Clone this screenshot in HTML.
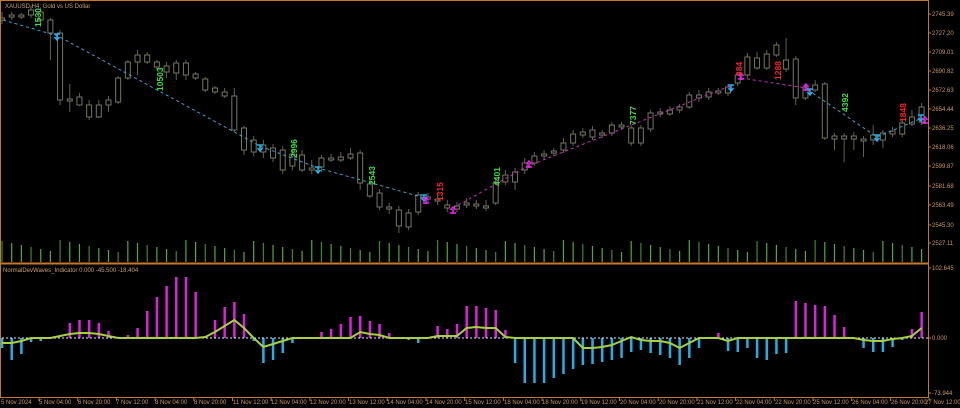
<!DOCTYPE html>
<html><head><meta charset="utf-8"><style>
html,body{margin:0;padding:0;background:#000;width:960px;height:408px;overflow:hidden}
svg{display:block}
text{font-family:"Liberation Sans",sans-serif}
</style></head><body>
<svg id="s" width="960" height="408" xmlns="http://www.w3.org/2000/svg">
<rect width="960" height="408" fill="#000"/>
<g id="g"></g>
<g fill="none" stroke="#c8782c" stroke-width="1">
<rect x="0.5" y="0.5" width="928" height="397"/>
<line x1="0" y1="263.5" x2="929" y2="263.5" stroke-width="2"/>
</g>
<g font-size="6" fill="#c8a070">
<text x="5" y="8">XAUUSD,H4:  Gold vs US Dollar</text>
<text x="3" y="272">NormalDevWaves_Indicator 0.000 -45.500 -18.404</text>
</g>
<g font-size="6" fill="#c89a60">
<text x="932" y="16">2745.39</text><text x="932" y="35">2727.20</text><text x="932" y="54">2709.01</text>
<text x="932" y="73">2690.82</text><text x="932" y="92">2672.63</text><text x="932" y="111">2654.44</text>
<text x="932" y="130">2636.25</text><text x="932" y="149">2618.06</text><text x="932" y="168">2599.87</text>
<text x="932" y="188">2581.68</text><text x="932" y="207">2563.49</text><text x="932" y="227">2545.30</text>
<text x="932" y="245">2527.11</text>
<text x="932" y="270">102.645</text><text x="932" y="340">0.000</text><text x="932" y="395">-73.944</text>
</g>
<g font-size="6" fill="#c89a60">
<text x="1" y="404">5 Nov 2024</text><text x="39" y="404">5 Nov 04:00</text><text x="78" y="404">6 Nov 20:00</text>
<text x="116" y="404">7 Nov 12:00</text><text x="155" y="404">8 Nov 04:00</text><text x="194" y="404">8 Nov 20:00</text>
<text x="233" y="404">11 Nov 12:00</text><text x="271" y="404">12 Nov 04:00</text><text x="310" y="404">12 Nov 20:00</text>
<text x="349" y="404">13 Nov 12:00</text><text x="387" y="404">14 Nov 04:00</text><text x="426" y="404">14 Nov 20:00</text>
<text x="465" y="404">15 Nov 12:00</text><text x="504" y="404">18 Nov 04:00</text><text x="542" y="404">18 Nov 20:00</text>
<text x="581" y="404">19 Nov 12:00</text><text x="620" y="404">20 Nov 04:00</text><text x="659" y="404">20 Nov 20:00</text>
<text x="697" y="404">21 Nov 12:00</text><text x="736" y="404">22 Nov 04:00</text><text x="775" y="404">22 Nov 20:00</text>
<text x="813" y="404">25 Nov 12:00</text><text x="852" y="404">26 Nov 04:00</text><text x="891" y="404">26 Nov 20:00</text>
<text x="925" y="404">27 Nov 12:00</text>
</g>
<g font-size="8.5" font-weight="bold">
<text transform="translate(41,27) rotate(-90)" fill="#3ee03e">1530</text>
<text transform="translate(163,91) rotate(-90)" fill="#3ee03e">10503</text>
<text transform="translate(297,158) rotate(-90)" fill="#3ee03e">2996</text>
<text transform="translate(375,185) rotate(-90)" fill="#3ee03e">2543</text>
<text transform="translate(443,201) rotate(-90)" fill="#ff2020">1315</text>
<text transform="translate(500,186) rotate(-90)" fill="#3ee03e">4401</text>
<text transform="translate(636,125) rotate(-90)" fill="#3ee03e">7377</text>
<text transform="translate(742,76) rotate(-90)" fill="#ff2020">384</text>
<text transform="translate(781,80) rotate(-90)" fill="#ff2020">1288</text>
<text transform="translate(848,112) rotate(-90)" fill="#3ee03e">4392</text>
<text transform="translate(906,122) rotate(-90)" fill="#ff2020">1848</text>
</g>
</svg>
<script>
var C=[[18,20,12,24],[15,17,12,20],[15,17,13,19],[10,15,6,18],[12,20,8,24],[20,33,18,60],[33,100,30,105],[99,101,84,112],[97,105,93,106],[105,117,100,120],[105,117,100,118],[100,105,96,112],[78,102,76,104],[62,78,60,80],[55,62,50,75],[55,62,52,64],[62,67,60,70],[66,72,62,78],[63,73,60,80],[63,75,60,80],[74,78,72,80],[79,90,77,92],[88,92,86,94],[92,96,88,98],[96,130,88,132],[128,150,126,155],[140,152,136,156],[145,152,140,158],[148,158,144,162],[150,170,146,174],[154,166,150,170],[155,170,150,172],[168,170,160,174],[158,167,155,172],[158,160,154,162],[157,160,152,162],[154,158,148,160],[153,183,150,190],[184,196,180,198],[193,207,189,210],[207,209,203,214],[210,226,206,233],[213,227,209,230],[195,212,192,215],[197,199,193,202],[199,201,194,205],[205,208,200,212],[206,209,202,212],[203,205,198,208],[204,206,200,209],[206,208,200,211],[182,203,178,205],[175,182,170,185],[172,182,168,190],[163,170,158,174],[156,163,152,166],[154,156,150,160],[151,153,148,156],[143,150,138,153],[134,143,130,146],[132,135,128,138],[130,137,126,140],[133,135,130,138],[125,133,122,136],[125,127,122,130],[128,143,125,146],[128,143,125,146],[113,129,110,132],[112,114,108,117],[110,114,106,116],[107,110,104,113],[95,107,92,109],[95,98,90,102],[92,97,88,100],[91,93,88,95],[87,93,84,96],[75,83,72,86],[57,75,53,78],[58,68,52,70],[54,68,50,70],[45,55,42,57],[60,69,38,72],[59,98,56,105],[88,98,84,100],[85,90,80,92],[84,138,82,140],[136,139,133,150],[136,139,133,162],[136,139,132,150],[139,141,136,157],[135,140,125,145],[133,140,130,148],[131,134,127,137],[123,134,120,137],[117,124,110,126],[107,122,103,125]];
var H=[-10,-22,-16,-4,-3,1,0,15,18,18,15,7,0,3,10,27,41,52,61,61,46,2,18,31,36,24,-3,-25,-22,-15,-5,0,1,6,9,14,21,22,17,14,5,0,-2,-5,0,12,9,14,32,32,30,28,8,-25,-45,-45,-45,-40,-36,-31,-27,-26,-24,-22,-20,-14,-12,-15,-17,-20,-27,-20,-10,0,5,-13,-14,-10,-20,-22,-16,-15,37,35,33,32,23,11,0,-10,-14,-14,-9,-2,9,26];
var L={0:-5,1:-5,2:-3,6:2,7:4,8:5,9:5,10:4,11:2,21:1,22:6,23:12,24:18,25:10,27:-9,28:-6,29:-3,37:6,38:4,39:3,45:2,46:2,47:2,48:10,49:11,50:10,51:10,52:1,60:-10,61:-10,62:-9,63:-7,64:-3,65:1,66:-2,67:-3,68:-3,69:-5,70:-10,71:-5,75:-3,89:-2,90:-3,91:-3,92:-1,94:2,95:10};
var o='',Z=338;
function X(i){return 2+9.68*i}
for(var i=0;i<96;i++){var x=X(i),c=C[i];
 o+='<line x1="'+x+'" y1="'+c[2]+'" x2="'+x+'" y2="'+c[3]+'" stroke="#62624e"/>';
 o+='<rect x="'+(x-2.5)+'" y="'+c[0]+'" width="5" height="'+Math.max(1,c[1]-c[0])+'" fill="#000" stroke="#76765e"/>';
 var v=10+((i*37+11)%13);
 o+='<line x1="'+x+'" y1="'+(262-v)+'" x2="'+x+'" y2="262" stroke="'+(i%3?'#4cb02c':'#3a8a2a')+'" stroke-width="1.2"/>';
 var h=H[i];
 if(h>0)o+='<rect x="'+(x-1.2)+'" y="'+(Z-h)+'" width="2.5" height="'+h+'" fill="#e020e0"/>';
 else if(h<0)o+='<rect x="'+(x-1.2)+'" y="'+Z+'" width="2.5" height="'+(-h)+'" fill="#20b0e8"/>';
}
o+='<line x1="2" y1="'+Z+'" x2="928" y2="'+Z+'" stroke="#d8f0ff" stroke-dasharray="2,2"/>';
var p='';for(i=0;i<96;i++)p+=(i?'L':'M')+X(i)+' '+(Z-(L[i]||0));
o+='<path d="'+p+'" fill="none" stroke="#a8d040" stroke-width="2"/>';
o+='<polyline points="3,20 58,36 260,146 318,168 425,198" fill="none" stroke="#30a8d8" stroke-dasharray="3,3"/>';
o+='<polyline points="453,208 528,166 730,86" fill="none" stroke="#c030c0" stroke-dasharray="3,3"/>';
o+='<polyline points="741,78 806,88" fill="none" stroke="#c030c0" stroke-dasharray="3,3"/>';
o+='<polyline points="808,90 877,137 922,118" fill="none" stroke="#30a8d8" stroke-dasharray="3,3"/>';
var A=[[57,36,'c'],[260,147,'c'],[318,169,'c'],[424,197,'c'],[731,87,'c'],[810,91,'c'],[877,137,'c'],[921,117,'c'],[426,201,'m'],[453,211,'m'],[529,165,'m'],[741,77,'m'],[806,88,'m'],[925,121,'m']];
A.forEach(function(a){var col=a[2]=='c'?'#20b0f0':'#f020f0';
 if(a[2]=='c')o+='<path d="M'+(a[0]-3)+' '+(a[1]-2)+'h6M'+a[0]+' '+(a[1]-2)+'v5M'+(a[0]-2.5)+' '+(a[1]+1)+'l2.5 3 2.5-3" stroke="'+col+'" stroke-width="1.5" fill="none"/>';
 else o+='<path d="M'+(a[0]-3)+' '+(a[1]+2)+'h6M'+a[0]+' '+(a[1]+3)+'v-5M'+(a[0]-2.5)+' '+(a[1]-1)+'l2.5-3 2.5 3" stroke="'+col+'" stroke-width="1.5" fill="none"/>';});
var t='';[14,33,52,71,90,109,128,147,166,186,205,225,243,268,338,393].forEach(function(y){t+='<line x1="928" y1="'+y+'" x2="931" y2="'+y+'" stroke="#c8782c"/>'});
for(i=0;i<25;i++){var tx=39+38.7*i;t+='<line x1="'+tx+'" y1="398" x2="'+tx+'" y2="401" stroke="#c8782c"/>'}
o+=t;
document.getElementById('g').innerHTML=o;
</script>
</body></html>
